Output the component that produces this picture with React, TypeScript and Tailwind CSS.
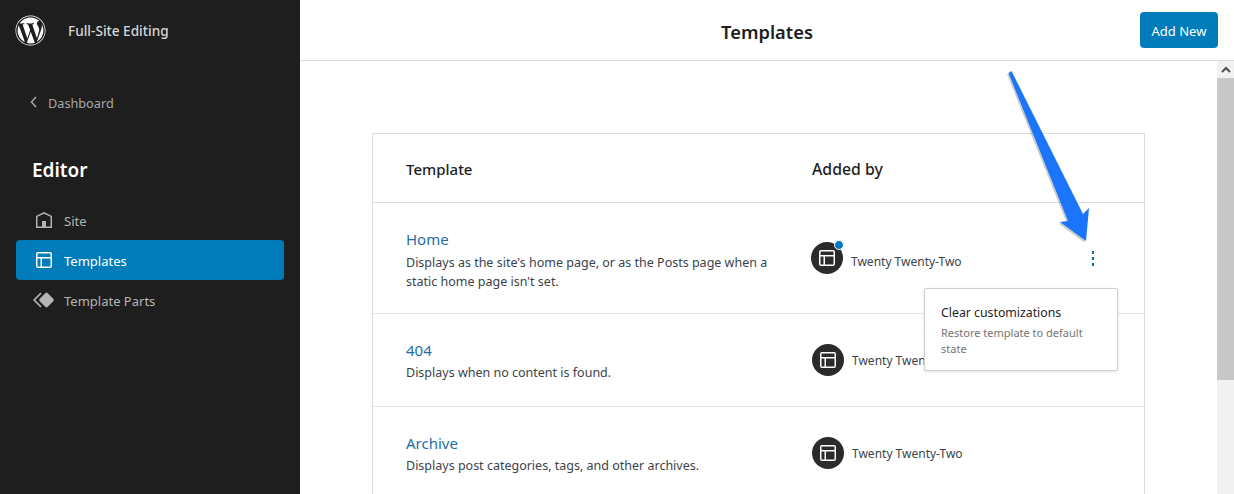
import React from "react";
import { FaWordpress } from "react-icons/fa";

const LayoutIcon = ({ className = "" }: { className?: string }) => (
  <svg viewBox="0 0 24 24" width="24" height="24" fill="currentColor" className={className}>
    <path d="M18 5.5H6a.5.5 0 00-.5.5v3h13V6a.5.5 0 00-.5-.5zm.5 5H10v8h8a.5.5 0 00.5-.5v-7.5zm-10 0h-3V18a.5.5 0 00.5.5h2.5v-8zM6 4h12a2 2 0 012 2v12a2 2 0 01-2 2H6a2 2 0 01-2-2V6a2 2 0 012-2z" />
  </svg>
);

const HomeIcon = () => (
  <svg viewBox="0 0 24 24" width="24" height="24" fill="currentColor">
    <path d="M12 4L4 7.9V20h16V7.9L12 4zm6.5 14.5H14V13h-4v5.5H5.5V8.8L12 5.7l6.5 3.1v9.7z" />
  </svg>
);

const PartsIcon = () => (
  <svg viewBox="0 0 24 24" width="24" height="24" fill="currentColor">
    <path d="M21.3 10.8l-5.6-5.6a1.7 1.7 0 00-2.4 0l-5.6 5.6a1.7 1.7 0 000 2.4l5.6 5.6a1.7 1.7 0 002.4 0l5.6-5.6a1.7 1.7 0 000-2.4z" />
    <path d="M9.5 5.7L3.2 12l6.3 6.3-1.1 1.1L1 12l7.4-7.4 1.1 1.1z" />
  </svg>
);

const Avatar = ({ dot = false }: { dot?: boolean }) => (
  <div className="relative flex h-8 w-8 shrink-0 items-center justify-center rounded-full bg-[#2b2b2b] text-white">
    <LayoutIcon />
    {dot && <span className="absolute right-[-1px] top-[-2px] h-2.5 w-2.5 rounded-full border border-white bg-[#007cba]" />}
  </div>
);

const NavItem = ({ icon, label, active = false }: { icon: React.ReactNode; label: string; active?: boolean }) => (
  <div className={`flex h-10 items-center gap-2 rounded-sm px-4 text-[13px] ${active ? "bg-[#007cba] text-white" : "text-[#b4b4b4]"}`}>
    {icon}
    <span className="pt-[4px]">{label}</span>
  </div>
);

const Row = ({ title, lines, h, pad, descGap, dot = false, authorShift = "", textShift = "pt-[1px]" }: { title: string; lines: string[]; h: string; pad: string; descGap: string; dot?: boolean; authorShift?: string; textShift?: string }) => (
  <div className={`flex items-start border-b border-[#e5e5e5] pl-[33px] ${h} ${pad}`}>
    <div className="w-[406px] shrink-0">
      <div className={`text-[15px] leading-[20px] text-[#1d6fa5] ${descGap}`}>{title}</div>
      {lines.map((l) => (
        <div key={l} className="text-[12.5px] leading-[19px] text-[#3c434a]">{l}</div>
      ))}
    </div>
    <div className={`flex items-center gap-2 text-[12px] text-[#3c434a] ${authorShift}`}>
      <Avatar dot={dot} />
      <span className={textShift}>Twenty Twenty-Two</span>
    </div>
  </div>
);

export default function App() {
  return (
    <div className="relative flex h-[494px] w-[1234px] overflow-hidden bg-white font-['Noto_Sans','Open_Sans',sans-serif]">
      <aside className="flex w-[300px] shrink-0 flex-col bg-[#1e1e1e]">
        <div className="flex h-[61px] items-center pl-[15px]">
          <FaWordpress className="text-white" size={31} />
          <span className="ml-[22px] pt-[2px] text-[13.6px] font-medium text-[#d6d6d6]">Full-Site Editing</span>
        </div>
        <div className="mt-[30px] flex items-center pl-[27px] text-[12.7px] leading-[24px] text-[#a8a8a8]">
          <svg width="14" height="14" viewBox="0 0 14 14" fill="none" stroke="currentColor" strokeWidth="1.5" className="mb-[2px]">
            <path d="M9 2L4.5 7 9 12" />
          </svg>
          <span className="ml-[7px]">Dashboard</span>
        </div>
        <div className="mt-[41px] pl-[32px] text-[19px] font-semibold leading-[28px] text-white">Editor</div>
        <nav className="mt-[16px] flex flex-col px-[16px]">
          <NavItem icon={<HomeIcon />} label="Site" />
          <NavItem icon={<LayoutIcon />} label="Templates" active />
          <NavItem icon={<PartsIcon />} label="Template Parts" />
        </nav>
      </aside>

      <main className="flex min-w-0 flex-1 flex-col">
        <header className="relative flex h-[61px] shrink-0 items-center justify-center border-b border-[#dcdcdc]">
          <h1 className="pt-[4px] text-[18.3px] font-semibold text-[#1e1e1e]">Templates</h1>
          <button className="absolute right-[16px] top-[12px] h-9 w-[78px] rounded-sm bg-[#007cba] pt-[3px] text-[13px] text-white">Add New</button>
        </header>
        <div className="flex min-h-0 flex-1">
          <div className="min-w-0 flex-1 overflow-hidden pl-[72px] pt-[72px]">
            <div className="w-[773px] border border-[#dcdcdc]">
              <div className="flex h-[69px] items-center border-b border-[#dcdcdc] pl-[33px] pt-[2px] text-[15px] font-medium leading-[22px] text-[#1e1e1e]">
                <span className="w-[406px]">Template</span>
                <span className="text-[15.8px]">Added by</span>
              </div>
              <Row title="Home" h="h-[111px]" pad="pt-[26px]" descGap="mb-[4px]" dot authorShift="ml-[-1px] mt-[13px]" textShift="pt-[7px]" lines={["Displays as the site's home page, or as the Posts page when a", "static home page isn't set."]} />
              <Row title="404" h="h-[93px]" pad="pt-[26px]" descGap="mb-[3px]" authorShift="mt-[4px]" lines={["Displays when no content is found."]} />
              <Row title="Archive" h="h-[93px]" pad="pt-[26px]" descGap="mb-[3px]" authorShift="mt-[4px]" lines={["Displays post categories, tags, and other archives."]} />
            </div>
          </div>
          <div className="flex w-[17px] shrink-0 flex-col bg-[#f1f1f1]">
            <div className="flex h-[17px] items-center justify-center text-[#505050]">
              <svg width="10" height="7" viewBox="0 0 10 7" fill="none" stroke="currentColor" strokeWidth="2"><path d="M1 6l4-4 4 4" /></svg>
            </div>
            <div className="h-[302px] bg-[#c8c8c8]" />
          </div>
        </div>
      </main>

      <div className="absolute left-[1083px] top-[247px] flex h-[22px] w-[20px] flex-col items-center justify-center gap-[3px]">
        <span className="h-[3px] w-[2px] bg-[#0a6a9a]" />
        <span className="h-[3px] w-[2px] bg-[#0a6a9a]" />
        <span className="h-[3px] w-[2px] bg-[#0a6a9a]" />
      </div>

      <div className="absolute left-[924px] top-[288px] h-[83px] w-[194px] rounded-[2px] border border-[#cfcfcf] bg-white pl-[16px] pt-[14px] shadow-[0_1px_3px_rgba(0,0,0,0.12)]">
        <div className="text-[12.3px] leading-[20px] text-[#1e1e1e]">Clear customizations</div>
        <div className="mt-[2px] w-[160px] text-[11px] leading-[16px] text-[#757575]">Restore template to default state</div>
      </div>

      <svg className="absolute left-[1000px] top-[60px]" width="100" height="190" viewBox="0 0 100 190">
        <polygon points="11.5,11 83,154 89,148 86,181 60,162 68,161 8.5,13" fill="#000" opacity="0.2" transform="translate(-1.5 1.5)" />
        <polygon points="11.5,11 83,154 89,148 86,181 60,162 68,161 8.5,13" fill="#1a75fb" />
      </svg>
    </div>
  );
}
